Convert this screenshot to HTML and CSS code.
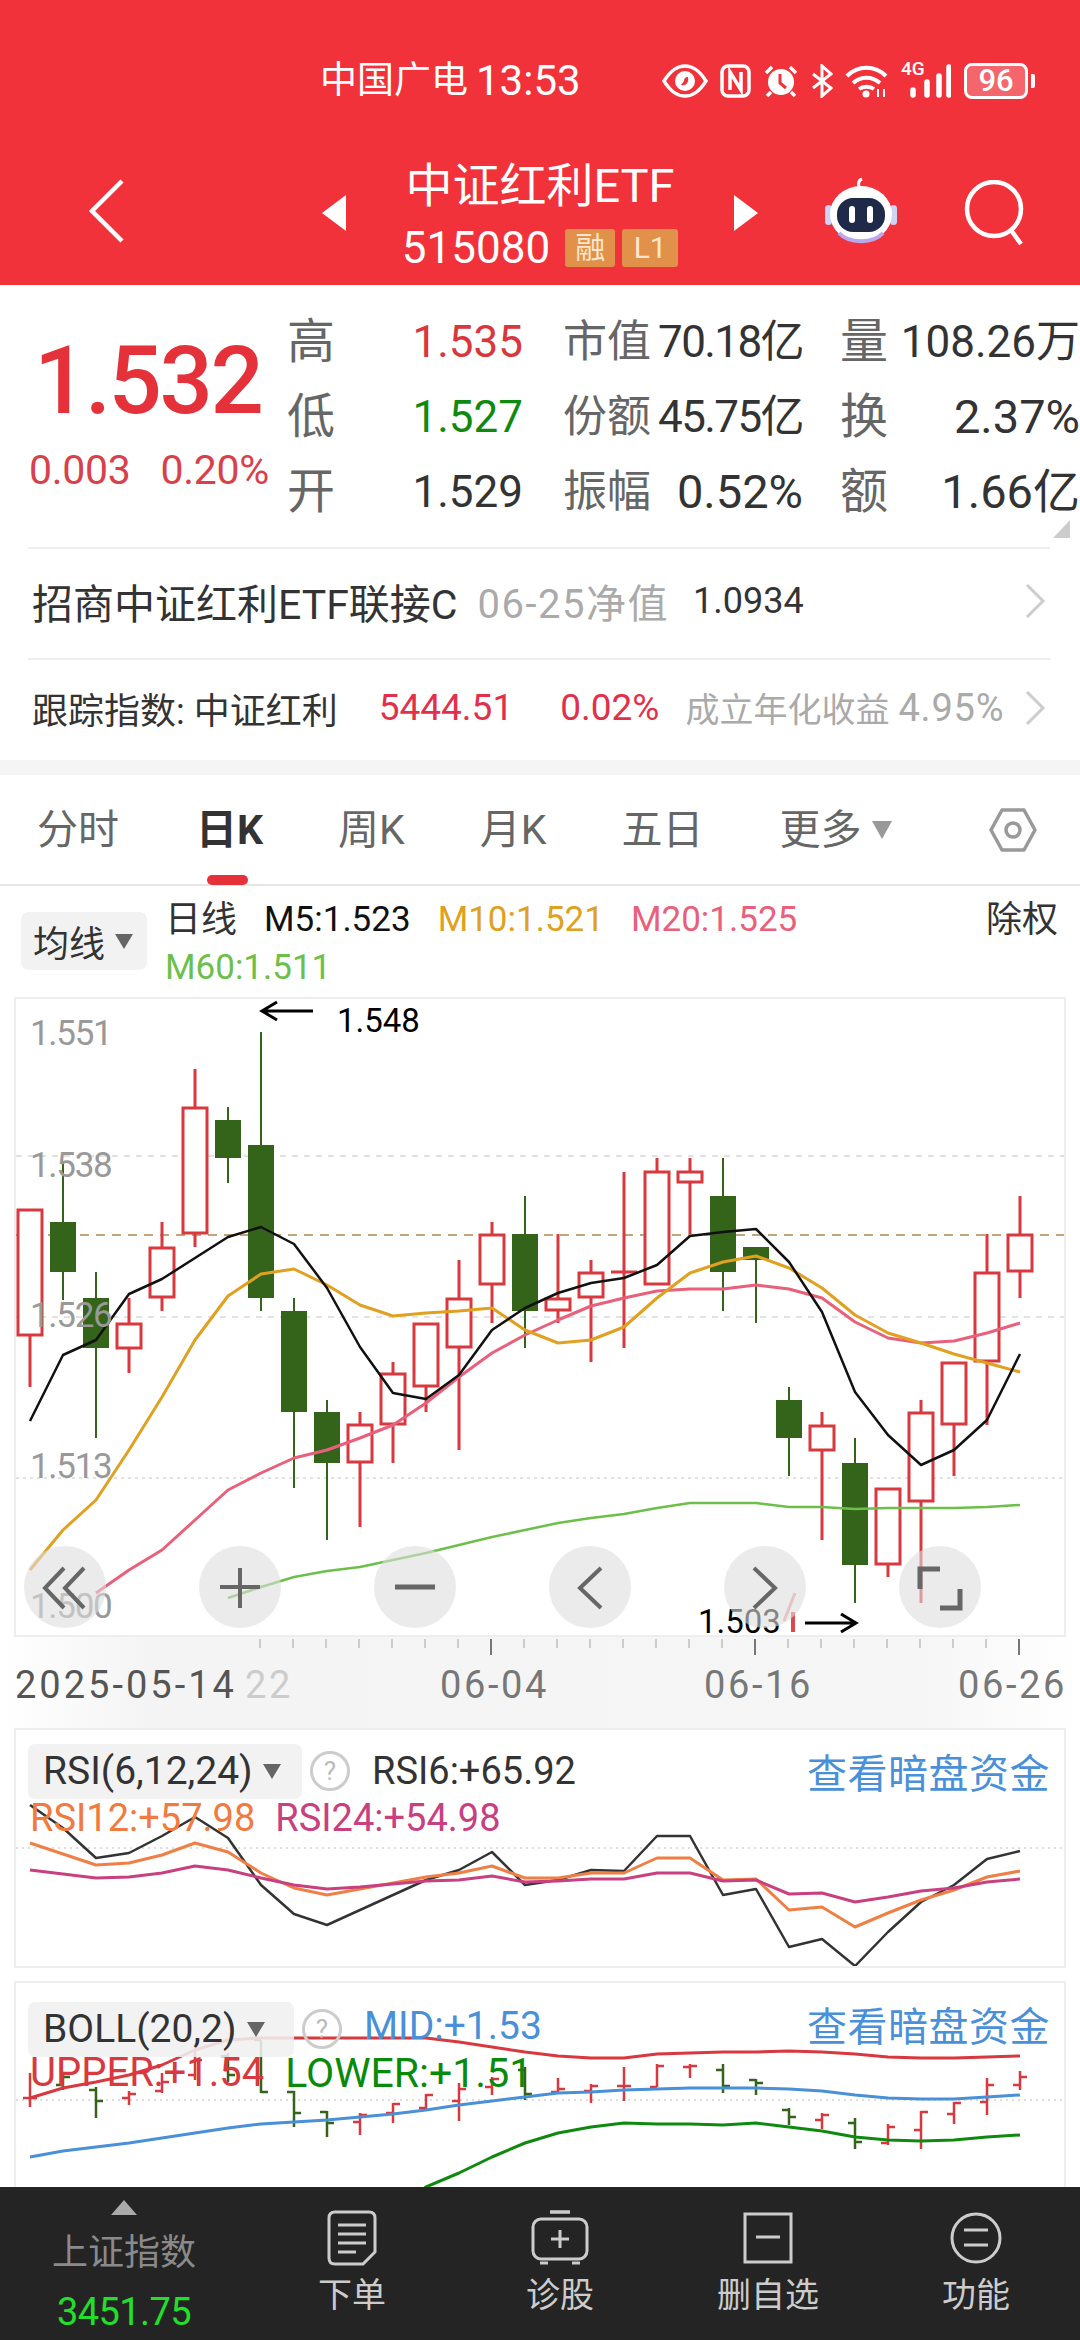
FILE: index.html
```html
<!DOCTYPE html>
<html lang="zh">
<head>
  <meta charset="UTF-8">
  <title>中证红利ETF</title>
  <meta name="viewport" content="width=device-width, initial-scale=1">
  <link rel="stylesheet" href="styles.css">
</head>
<body>
<div class="page">

  <header class="top">
    <div class="status">
      <span class="carrier">中国广电</span>
      <span class="clock">13:53</span>
      <div class="status-icons">
        <svg width="46" height="34" viewBox="0 0 46 34"><path d="M2 17C9 6 15 2 23 2s14 4 21 15c-7 11-13 15-21 15S9 28 2 17z" fill="none" stroke="#fff" stroke-width="3.5"/><circle cx="23" cy="17" r="10" fill="#fff"/><path d="M19 21c5 1 8-2 7-8-3 0-4 2-4 4z" fill="#f1323b"/></svg>
        <svg width="31" height="34" viewBox="0 0 31 34"><rect x="2" y="2" width="27" height="30" rx="6" fill="none" stroke="#fff" stroke-width="3.5"/><path d="M10 26V8l11 18V8" fill="none" stroke="#fff" stroke-width="3.5"/></svg>
        <svg width="36" height="34" viewBox="0 0 36 34"><circle cx="18" cy="18" r="13" fill="#fff"/><path d="M17 10v9l6 5" fill="none" stroke="#f1323b" stroke-width="3"/><path d="M3 9l6-6M33 9l-6-6M8 28l-4 4M28 28l4 4" stroke="#fff" stroke-width="3.5"/></svg>
        <svg width="22" height="34" viewBox="0 0 22 34"><path d="M2 10l18 14-9 8V2l9 8L2 24" fill="none" stroke="#fff" stroke-width="3"/></svg>
        <svg width="44" height="34" viewBox="0 0 44 34"><path d="M2 12c11-11 28-11 39 0M8 19c8-7 19-7 27 0M14 25c4-3 11-3 15 0" fill="none" stroke="#fff" stroke-width="4"/><circle cx="21" cy="30" r="3.5" fill="#fff"/><path d="M33 25v8M39 25v8" stroke="#fff" stroke-width="2"/></svg>
        <div class="signal">
          <span class="signal-label">4G</span>
          <svg width="50" height="34" viewBox="0 0 50 34"><path d="M12 26v5M26 18v13M38 12v19M48 3v28" stroke="#fff" stroke-width="5.5" stroke-linecap="round"/></svg>
        </div>
        <div class="battery"><span>96</span></div>
        <i class="battery-tip"></i>
      </div>
    </div>
    <nav class="nav">
      <svg class="back" width="38" height="66" viewBox="0 0 38 66"><path d="M34 3L4 33l30 30" fill="none" stroke="#fff" stroke-width="4.5"/></svg>
      <i class="tri tri-left"></i>
      <div class="title">
        <div class="name">中证红利ETF</div>
        <div class="code">515080<span class="badge">融</span><span class="badge badge-l">L1</span></div>
      </div>
      <i class="tri tri-right"></i>
      <svg class="bot" width="72" height="68" viewBox="0 0 72 68">
        <path d="M34 10c-1-4 0-7 3-8" fill="none" stroke="#fff" stroke-width="3"/>
        <rect x="0" y="28" width="7" height="20" rx="3.5" fill="#cfd3f5"/>
        <rect x="65" y="28" width="7" height="20" rx="3.5" fill="#cfd3f5"/>
        <ellipse cx="36" cy="37" rx="31" ry="28" fill="#fff"/>
        <path d="M14 56c10 11 34 11 44 0" fill="none" stroke="#b9a8ee" stroke-width="4"/>
        <rect x="12" y="21" width="48" height="34" rx="16" fill="#1f2a48"/>
        <rect x="24" y="29" width="6" height="17" rx="3" fill="#fff"/>
        <rect x="42" y="29" width="6" height="17" rx="3" fill="#fff"/>
      </svg>
      <svg class="search" width="70" height="66" viewBox="0 0 70 66"><circle cx="31" cy="29" r="27" fill="none" stroke="#fff" stroke-width="4.5"/><path d="M48 50l10 14" stroke="#fff" stroke-width="4.5"/></svg>
    </nav>
  </header>

  <section class="quote">
    <div class="price-box">
      <div class="price">1.532</div>
      <div class="change"><span>0.003</span><span>0.20%</span></div>
    </div>
    <div class="stats">
      <span class="lab">高</span><span class="val up">1.535</span>
      <span class="lab">市值</span><span class="val tight">70.18亿</span>
      <span class="lab">量</span><span class="val">108.26万</span>

      <span class="lab">低</span><span class="val down">1.527</span>
      <span class="lab">份额</span><span class="val tight">45.75亿</span>
      <span class="lab">换</span><span class="val wide">2.37%</span>

      <span class="lab">开</span><span class="val">1.529</span>
      <span class="lab">振幅</span><span class="val wide">0.52%</span>
      <span class="lab">额</span><span class="val wide">1.66亿</span>
    </div>
    <i class="corner"></i>
  </section>

  <section class="info">
    <div class="info-row">
      <span class="fund">招商中证红利ETF联接C</span>
      <span class="nav-date">06-25净值</span>
      <span class="nav-val">1.0934</span>
      <svg class="chev" width="22" height="36" viewBox="0 0 22 36"><path d="M3 2l16 16L3 34" fill="none" stroke="#ccc" stroke-width="3"/></svg>
    </div>
    <div class="info-row">
      <span class="track">跟踪指数: 中证红利</span>
      <span class="track-val">5444.51</span>
      <span class="track-pct">0.02%</span>
      <span class="since">成立年化收益</span>
      <span class="since-val">4.95%</span>
      <svg class="chev" width="22" height="36" viewBox="0 0 22 36"><path d="M3 2l16 16L3 34" fill="none" stroke="#ccc" stroke-width="3"/></svg>
    </div>
  </section>

  <div class="band"></div>

  <div class="tabs">
    <span class="tab">分时</span>
    <span class="tab active">日K</span>
    <span class="tab">周K</span>
    <span class="tab">月K</span>
    <span class="tab">五日</span>
    <span class="tab tab-more">更多<i class="caret"></i></span>
    <svg class="gear" width="48" height="46" viewBox="0 0 48 46"><path d="M13 3h22l11 20-11 20H13L2 23z" fill="none" stroke="#999" stroke-width="3.5" stroke-linejoin="round"/><circle cx="24" cy="23" r="7" fill="none" stroke="#999" stroke-width="3.5"/></svg>
  </div>

  <div class="ma">
    <div class="chip ma-chip">均线<i class="caret"></i></div>
    <div class="ma-legend">
      <span class="ma-name">日线</span>
      <span class="m5">M5:1.523</span>
      <span class="m10">M10:1.521</span>
      <span class="m20">M20:1.525</span>
      <span class="m60">M60:1.511</span>
    </div>
    <span class="adjust">除权</span>
  </div>

  <div class="chart">
    <svg id="kline" class="kline" viewBox="16 999 1048 636">
      <g id="kline-plot"></g>
      <text class="axis-y" x="30" y="1045">1.551</text>
      <text class="axis-y" x="30" y="1177">1.538</text>
      <text class="axis-y" x="30" y="1327">1.526</text>
      <text class="axis-y" x="30" y="1478">1.513</text>
      <text class="axis-y" x="30" y="1618">1.500</text>
      <path d="M262 1011h51M277 1002l-15 9 15 9" fill="none" stroke="#000" stroke-width="3"/>
      <text class="mark" x="337" y="1032">1.548</text>
      <text class="mark" x="698" y="1633">1.503</text>
      <path d="M805 1623h51M841 1614l15 9-15 9" fill="none" stroke="#000" stroke-width="3"/>
      <path d="M795 1593l-11 28" fill="none" stroke="#e8a0a0" stroke-width="3"/>
      <path d="M793 1612v20" fill="none" stroke="#dc4a4a" stroke-width="4"/>
    </svg>
    <div class="chart-btns">
      <span class="round"><svg width="82" height="82" viewBox="0 0 82 82"><path d="M40 22L21 42l19 20M60 22L41 42l19 20" fill="none" stroke="#666" stroke-width="4"/></svg></span>
      <span class="round"><svg width="82" height="82" viewBox="0 0 82 82"><path d="M21 41h40M41 22v40" fill="none" stroke="#666" stroke-width="4"/></svg></span>
      <span class="round"><svg width="82" height="82" viewBox="0 0 82 82"><path d="M21 41h40" fill="none" stroke="#666" stroke-width="5"/></svg></span>
      <span class="round"><svg width="82" height="82" viewBox="0 0 82 82"><path d="M52 22L31 42l21 20" fill="none" stroke="#666" stroke-width="4"/></svg></span>
      <span class="round"><svg width="82" height="82" viewBox="0 0 82 82"><path d="M30 22l21 20-21 20" fill="none" stroke="#666" stroke-width="4"/></svg></span>
      <span class="round"><svg width="82" height="82" viewBox="0 0 82 82"><path d="M21 43V23h20M61 43v19H41" fill="none" stroke="#666" stroke-width="5"/></svg></span>
    </div>
  </div>

  <div class="time-axis">
    <svg id="ticks" width="1080" height="91" viewBox="0 1637 1080 91">
      <text class="axis-x first" x="15" y="1698">2025-05-14</text>
      <text class="axis-x faint" x="245" y="1698">22</text>
      <text class="axis-x mid" x="440" y="1698">06-04</text>
      <text class="axis-x mid" x="704" y="1698">06-16</text>
      <text class="axis-x mid" x="958" y="1698">06-26</text>
    </svg>
  </div>

  <section class="panel panel-rsi">
    <svg id="rsi" class="panel-plot" viewBox="16 1730 1048 236"></svg>
    <div class="panel-head">
      <div class="chip rsi-chip">RSI(6,12,24)<i class="caret"></i></div>
      <span class="help">?</span>
      <span class="head-val">RSI6:+65.92</span>
      <span class="dark-link">查看暗盘资金</span>
    </div>
    <div class="panel-sub rsi-sub">
      <span class="rsi12">RSI12:+57.98</span>
      <span class="rsi24">RSI24:+54.98</span>
    </div>
  </section>

  <section class="panel panel-boll">
    <svg id="boll" class="panel-plot" viewBox="16 1983 1048 236"></svg>
    <div class="panel-head">
      <div class="chip boll-chip">BOLL(20,2)<i class="caret"></i></div>
      <span class="help">?</span>
      <span class="head-val mid-val">MID:+1.53</span>
      <span class="dark-link">查看暗盘资金</span>
    </div>
    <div class="panel-sub boll-sub">
      <span class="upper">UPPER:+1.54</span>
      <span class="lower">LOWER:+1.51</span>
    </div>
  </section>

  <footer class="bar">
    <div class="index">
      <i class="index-tri"></i>
      <span class="index-name">上证指数</span>
      <span class="index-val">3451.75</span>
    </div>
    <div class="action">
      <svg width="50" height="56" viewBox="0 0 50 56"><path d="M8 2h34q6 0 6 6v34L36 54H8q-6 0-6-6V8q0-6 6-6z" fill="none" stroke="#ccc" stroke-width="3"/><path d="M11 15h28M11 24h28M11 33h28M11 42h18" stroke="#ccc" stroke-width="3"/></svg>
      <span>下单</span>
    </div>
    <div class="action">
      <svg width="58" height="56" viewBox="0 0 58 56"><path d="M19 2h20" stroke="#ccc" stroke-width="3.5"/><rect x="2" y="9" width="54" height="40" rx="8" fill="none" stroke="#ccc" stroke-width="3"/><path d="M29 20v18M20 29h18M9 53h8M41 53h8" stroke="#ccc" stroke-width="3"/></svg>
      <span>诊股</span>
    </div>
    <div class="action">
      <svg width="50" height="52" viewBox="0 0 50 52"><rect x="2" y="2" width="46" height="48" fill="none" stroke="#ccc" stroke-width="3"/><path d="M13 25h24" stroke="#ccc" stroke-width="3"/></svg>
      <span>删自选</span>
    </div>
    <div class="action">
      <svg width="52" height="52" viewBox="0 0 52 52"><circle cx="26" cy="26" r="24" fill="none" stroke="#ccc" stroke-width="3"/><path d="M14 18h24M14 33h24" stroke="#ccc" stroke-width="3"/></svg>
      <span>功能</span>
    </div>
  </footer>

</div>
<script src="chart.js"></script>
</body>
</html>
```

FILE: styles.css
```css
*, *::before, *::after {
  box-sizing: border-box;
  margin: 0;
  padding: 0;
}
body {
  background: #fff;
  font-family: Roboto, "Noto Sans CJK SC", sans-serif;
  color: #333;
}
i {
  display: block;
}
.page {
  width: 1080px;
  height: 2340px;
  display: flex;
  flex-direction: column;
  overflow: hidden;
}

/* red header */
.top {
  height: 285px;
  background: #f1323b;
  color: #fff;
}
.status {
  height: 105px;
  margin-bottom: 45px;
  padding: 57px 45px 0 320px;
  display: flex;
  align-items: center;
}
.carrier {
  font-size: 37px;
  line-height: 50px;
}
.clock {
  font-size: 42px;
  line-height: 50px;
  margin-left: 8px;
}
.status-icons {
  margin-left: auto;
  display: flex;
  align-items: center;
  gap: 12px;
}
.signal {
  position: relative;
}
.signal svg {
  display: block;
}
.signal-label {
  position: absolute;
  left: 0;
  top: -5px;
  font-size: 19px;
  line-height: 20px;
  font-weight: 500;
}
.battery {
  width: 64px;
  height: 36px;
  border: 3px solid #fff;
  border-radius: 8px;
  background: rgba(255, 255, 255, .25);
  display: flex;
  align-items: center;
  justify-content: center;
  margin-left: 1px;
}
.battery span {
  font-size: 31px;
  line-height: 30px;
  font-weight: 500;
}
.battery-tip {
  width: 4px;
  height: 14px;
  background: #fff;
  margin-left: -9px;
  border-radius: 0 2px 2px 0;
}
.nav {
  height: 135px;
  display: flex;
  align-items: center;
}
.back {
  margin: 0 0 14px 88px;
}
.tri {
  width: 0;
  height: 0;
  margin-bottom: 9px;
  border-top: 18px solid transparent;
  border-bottom: 18px solid transparent;
}
.tri-left {
  margin-left: 196px;
  border-right: 24px solid #fff;
}
.tri-right {
  border-left: 24px solid #fff;
}
.title {
  width: 388px;
  text-align: center;
}
.name {
  font-size: 47px;
  line-height: 60px;
  padding-top: 3px;
  margin-bottom: -3px;
}
.code {
  font-size: 44px;
  line-height: 70px;
  display: flex;
  justify-content: center;
  align-items: center;
}
.badge {
  width: 50px;
  height: 38px;
  margin-left: 15px;
  background: #e2914a;
  color: #ffe6cc;
  font-size: 30px;
  line-height: 38px;
  border-radius: 3px;
}
.badge-l {
  width: 56px;
  margin-left: 7px;
}
.bot {
  margin: 0 0 14px 67px;
}
.search {
  margin: 0 0 9px 66px;
}

/* quote */
.quote {
  height: 262px;
  display: flex;
  position: relative;
}
.price-box {
  width: 287px;
  padding: 46px 0 0 30px;
}
.price {
  font-size: 94px;
  line-height: 100px;
  font-weight: 500;
  color: #e5323a;
  letter-spacing: -2.5px;
  padding-left: 4px;
}
.change {
  margin-top: 17px;
  margin-left: -1px;
  display: flex;
  gap: 30px;
  font-size: 41px;
  line-height: 44px;
  color: #d9414a;
  letter-spacing: -.3px;
}
.stats {
  padding-top: 19px;
  display: grid;
  grid-template-columns: 48px 188px 128px 152px 85px 192px;
  grid-auto-rows: 75px;
  align-items: center;
}
.lab {
  font-size: 44px;
  color: #666;
  text-align: right;
  line-height: 60px;
  white-space: nowrap;
}
.stats .lab:nth-child(6n + 1),
.stats .lab:nth-child(6n + 5) {
  font-size: 48px;
}
.val {
  font-size: 44px;
  line-height: 60px;
  text-align: right;
  color: #333;
  white-space: nowrap;
}
.tight {
  letter-spacing: -1.6px;
}
.wide {
  font-size: 47px;
}
.up {
  color: #d9363e;
}
.down {
  color: #0f8a0f;
}
.corner {
  position: absolute;
  right: 10px;
  bottom: 9px;
  width: 0;
  height: 0;
  border-left: 17px solid transparent;
  border-bottom: 18px solid #ccc;
}

/* fund rows */
.info {
  padding: 0 30px 0 28px;
}
.info-row {
  height: 111px;
  border-top: 2px solid #eee;
  display: flex;
  align-items: center;
  padding: 0 0 5px 4px;
}
.info-row + .info-row {
  height: 102px;
}
.fund {
  font-size: 41px;
  color: #333;
  white-space: nowrap;
}
.nav-date {
  font-size: 40px;
  color: #aaa;
  margin-left: 20px;
  letter-spacing: 1.5px;
}
.nav-val {
  font-size: 36px;
  color: #333;
  margin-left: 24px;
}
.chev {
  margin: 0 4px 0 auto;
}
.track {
  font-size: 36px;
  color: #333;
  white-space: nowrap;
}
.track-val {
  font-size: 37px;
  color: #e3304a;
  margin-left: 41px;
}
.track-pct {
  font-size: 37px;
  color: #e3304a;
  margin-left: 47px;
}
.since {
  font-size: 34px;
  color: #aaa;
  margin-left: 26px;
}
.since-val {
  font-size: 38px;
  color: #aaa;
  margin-left: 9px;
  letter-spacing: .8px;
}
.band {
  height: 15px;
  background: #f5f5f5;
}

/* tabs */
.tabs {
  height: 111px;
  padding: 0 43px 0 37px;
  display: flex;
  align-items: center;
  gap: 75px;
  border-bottom: 2px solid #e6e6e6;
  position: relative;
}
.tab {
  font-size: 41px;
  color: #666;
  line-height: 110px;
  display: flex;
  align-items: center;
  position: relative;
}
.active {
  color: #333;
  font-weight: 700;
  margin-left: 2px;
}
.active::after {
  content: "";
  position: absolute;
  left: 11px;
  bottom: 0;
  width: 41px;
  height: 10px;
  border-radius: 5px;
  background: #e5323a;
}
.tab-more {
  margin-left: 1px;
}
.caret {
  width: 0;
  height: 0;
  border-left: 10px solid transparent;
  border-right: 10px solid transparent;
  border-top: 18px solid #999;
  margin-left: 10px;
}
.gear {
  margin-left: auto;
}

/* moving average legend */
.ma {
  height: 111px;
  padding: 0 22px 0 21px;
  display: flex;
  align-items: flex-start;
  position: relative;
}
.chip {
  background: rgba(240, 240, 240, .88);
  border-radius: 7px;
  display: flex;
  align-items: center;
}
.chip .caret {
  border-top-color: #666;
  border-left-width: 9px;
  border-right-width: 9px;
  border-top-width: 15px;
}
.ma-chip {
  width: 126px;
  height: 58px;
  margin-top: 26px;
  padding-left: 12px;
  font-size: 36px;
  color: #333;
}
.ma-legend {
  width: 660px;
  margin: 10px 0 0 18px;
  display: flex;
  flex-wrap: wrap;
  font-size: 35px;
  line-height: 48px;
  column-gap: 27px;
}
.ma-name {
  font-size: 36px;
  color: #333;
}
.m5 {
  color: #111;
}
.m10 {
  color: #e0a020;
}
.m20 {
  color: #e8607a;
}
.m60 {
  color: #6cc04a;
}
.adjust {
  margin: 10px 0 0 auto;
  font-size: 36px;
  line-height: 48px;
  color: #333;
}

/* main chart */
.chart {
  margin: 0 14px;
  width: 1052px;
  height: 640px;
  position: relative;
}
.kline {
  display: block;
  width: 1052px;
  height: 640px;
  border: 2px solid #eee;
  overflow: visible;
}
.axis-y {
  font-size: 35px;
  fill: #999;
  letter-spacing: -1.3px;
}
.mark {
  font-size: 33px;
  fill: #000;
}
.chart-btns {
  position: absolute;
  left: 10px;
  top: 549px;
  display: flex;
  gap: 93px;
}
.round {
  width: 82px;
  height: 82px;
  border-radius: 50%;
  background: rgba(222, 222, 222, .6);
}
.round svg {
  display: block;
}
.time-axis {
  height: 91px;
  background: linear-gradient(90deg, #fff, #f4f4f4 14%, #f6f6f6 85%, #fff);
}
.time-axis svg {
  display: block;
}
.axis-x {
  font-size: 38px;
  letter-spacing: 2.6px;
  fill: #777;
}
.axis-x.first {
  fill: #555;
  letter-spacing: 3px;
}
.axis-x.faint {
  fill: #ccc;
}

/* indicator panels */
.panel {
  margin: 0 14px;
  width: 1052px;
  border: 2px solid #eee;
  position: relative;
}
.panel-rsi {
  height: 240px;
  flex: none;
}
.panel-boll {
  margin-top: 13px;
  flex: 1;
  border-bottom: 0;
  overflow: hidden;
}
.panel-plot {
  position: absolute;
  left: 0;
  top: 0;
  width: 1048px;
  height: 236px;
}
.panel-head {
  position: relative;
  padding: 12px 14px 0 12px;
  display: flex;
  align-items: center;
}
.rsi-chip,
.boll-chip {
  height: 55px;
  padding-left: 15px;
  font-size: 39px;
  color: #333;
  white-space: nowrap;
}
.rsi-chip {
  width: 274px;
}
.boll-chip {
  width: 266px;
}
.help {
  width: 40px;
  height: 40px;
  margin-left: 8px;
  border: 3px solid #ccc;
  border-radius: 50%;
  color: #bbb;
  font-size: 26px;
  line-height: 34px;
  text-align: center;
}
.head-val {
  margin-left: 22px;
  font-size: 38px;
  color: #333;
}
.mid-val {
  font-size: 39px;
  color: #4a90d9;
  margin-bottom: 6px;
}
.dark-link {
  margin-left: auto;
  font-size: 40px;
  color: #4a90d9;
  letter-spacing: .5px;
}
.panel-boll .dark-link {
  margin-bottom: 10px;
}
.panel-sub {
  position: relative;
  padding-left: 14px;
  display: flex;
}
.rsi-sub {
  margin-top: -2px;
  font-size: 38px;
  line-height: 40px;
  gap: 20px;
}
.rsi12 {
  color: #f07a40;
}
.rsi24 {
  color: #c8407f;
}
.boll-sub {
  margin-top: -10px;
  font-size: 40px;
  line-height: 40px;
  gap: 21px;
}
.upper {
  color: #d8383e;
}
.lower {
  color: #0a8a0a;
  font-size: 41px;
}

/* bottom bar */
.bar {
  height: 153px;
  flex: none;
  background: #242424;
  display: grid;
  grid-template-columns: 248px repeat(4, 208px);
  color: #ccc;
  position: relative;
}
.index {
  display: flex;
  flex-direction: column;
  align-items: center;
  padding-top: 13px;
}
.index-tri {
  width: 0;
  height: 0;
  border-left: 13px solid transparent;
  border-right: 13px solid transparent;
  border-bottom: 15px solid #aaa;
}
.index-name {
  margin-top: 13px;
  font-size: 36px;
  line-height: 50px;
  color: #8a8a8a;
}
.index-val {
  margin-top: 9px;
  font-size: 38px;
  line-height: 50px;
  color: #22e02a;
  letter-spacing: -.6px;
}
.action {
  display: flex;
  flex-direction: column;
  align-items: center;
  padding-top: 23px;
  font-size: 34px;
  line-height: 50px;
}
.action svg {
  height: 56px;
  margin-bottom: 4px;
}
```

FILE: chart.js
```js
const NS_X = i => 30 + 33 * i;

// high, body top, body bottom, low, r/g
const candles = [
  [1209, 1209, 1336, 1387, 'r'], [1163, 1222, 1272, 1300, 'g'], [1272, 1298, 1348, 1438, 'g'],
  [1298, 1323, 1349, 1373, 'r'], [1222, 1247, 1298, 1311, 'r'], [1069, 1107, 1234, 1247, 'r'],
  [1107, 1120, 1158, 1183, 'g'], [1032, 1145, 1298, 1311, 'g'], [1298, 1311, 1412, 1488, 'g'],
  [1400, 1412, 1463, 1540, 'g'], [1412, 1424, 1463, 1527, 'r'], [1362, 1373, 1425, 1463, 'r'],
  [1323, 1323, 1387, 1412, 'r'], [1260, 1298, 1348, 1450, 'r'], [1222, 1234, 1285, 1323, 'r'],
  [1196, 1234, 1311, 1348, 'g'], [1234, 1298, 1311, 1323, 'r'], [1260, 1272, 1298, 1362, 'r'],
  [1172, 1272, 1272, 1348, 'r'], [1158, 1171, 1285, 1285, 'r'], [1158, 1171, 1183, 1234, 'r'],
  [1158, 1196, 1272, 1311, 'g'], [1247, 1247, 1260, 1323, 'g'], [1387, 1400, 1438, 1476, 'g'],
  [1412, 1425, 1451, 1540, 'r'], [1438, 1463, 1565, 1603, 'g'], [1488, 1488, 1565, 1577, 'r'],
  [1400, 1412, 1502, 1603, 'r'], [1362, 1362, 1425, 1476, 'r'], [1234, 1272, 1362, 1425, 'r'],
  [1196, 1234, 1272, 1298, 'r']
];

const m5 = [1421, 1355, 1340, 1294, 1279, 1258, 1237, 1227, 1244, 1288, 1347, 1393, 1399, 1375, 1330, 1308,
  1293, 1283, 1278, 1265, 1236, 1232, 1229, 1262, 1312, 1392, 1435, 1465, 1450, 1420, 1354];
const m10 = [1570, 1530, 1500, 1450, 1397, 1340, 1296, 1274, 1269, 1285, 1305, 1316, 1313, 1311, 1308, 1330,
  1343, 1340, 1327, 1298, 1273, 1262, 1256, 1268, 1288, 1315, 1333, 1343, 1354, 1363, 1372];
const m20 = [null, null, 1593, 1570, 1550, 1520, 1490, 1473, 1458, 1450, 1438, 1425, 1403, 1377, 1353, 1335,
  1320, 1306, 1298, 1291, 1289, 1289, 1285, 1289, 1298, 1322, 1338, 1343, 1341, 1333, 1323];
const m60 = [null, null, null, null, null, null, 1598, 1587, 1577, 1571, 1567, 1560, 1553, 1545, 1537, 1530,
  1523, 1518, 1514, 1508, 1503, 1503, 1503, 1507, 1507, 1509, 1508, 1508, 1508, 1507, 1505];

const rsi6 = [1805, 1828, 1858, 1853, 1836, 1817, 1838, 1885, 1914, 1925, 1910, 1895, 1880, 1870, 1852, 1885,
  1880, 1870, 1871, 1836, 1836, 1895, 1889, 1947, 1939, 1966, 1932, 1902, 1885, 1859, 1851];
const rsi12 = [1843, 1854, 1865, 1863, 1855, 1843, 1852, 1873, 1888, 1895, 1889, 1883, 1877, 1873, 1866, 1878,
  1878, 1873, 1873, 1858, 1858, 1880, 1879, 1910, 1907, 1927, 1913, 1900, 1890, 1877, 1871];
const rsi24 = [1870, 1874, 1878, 1877, 1873, 1866, 1870, 1878, 1885, 1889, 1887, 1884, 1881, 1880, 1876, 1882,
  1881, 1879, 1879, 1873, 1873, 1881, 1880, 1894, 1893, 1902, 1897, 1891, 1888, 1882, 1879];

const upper = [2098, 2088, 2082, 2075, 2065, 2050, 2040, 2038, 2038, 2038, 2038, 2038, 2038, 2042, 2047, 2052,
  2056, 2058, 2058, 2054, 2053, 2052, 2052, 2051, 2052, 2054, 2057, 2058, 2058, 2057, 2056];
const mid = [2157, 2151, 2147, 2143, 2138, 2133, 2128, 2124, 2122, 2120, 2117, 2114, 2110, 2105, 2101, 2097,
  2093, 2092, 2090, 2089, 2088, 2088, 2088, 2089, 2091, 2095, 2098, 2099, 2099, 2097, 2095];
const lower = [null, null, null, null, null, null, null, null, null, null, null, 2215, 2187, 2173, 2157, 2143,
  2133, 2127, 2123, 2124, 2124, 2125, 2123, 2127, 2131, 2137, 2140, 2141, 2140, 2137, 2135];

// high, low, left tick, right tick, r/g
const bars = [
  [2073, 2107, 2098, 2098, 'r'], [2075, 2090, 2085, 2077, 'g'], [2087, 2118, 2090, 2101, 'g'], [2091, 2105, 2098, 2094, 'r'],
  [2073, 2093, 2091, 2082, 'r'], [2047, 2080, 2075, 2060, 'r'], [2053, 2082, 2056, 2075, 'g'], [2040, 2093, 2040, 2092, 'g'],
  [2091, 2127, 2092, 2113, 'g'], [2111, 2137, 2112, 2123, 'g'], [2113, 2135, 2122, 2115, 'r'], [2103, 2123, 2113, 2104, 'r'],
  [2094, 2110, 2108, 2095, 'r'], [2083, 2121, 2101, 2089, 'r'], [2077, 2095, 2087, 2079, 'r'], [2067, 2100, 2070, 2094, 'g'],
  [2078, 2094, 2092, 2089, 'r'], [2084, 2103, 2091, 2086, 'r'], [2067, 2101, 2086, 2086, 'r'], [2064, 2087, 2087, 2066, 'r'],
  [2064, 2078, 2067, 2066, 'r'], [2064, 2093, 2070, 2086, 'g'], [2079, 2095, 2080, 2083, 'g'], [2108, 2125, 2110, 2117, 'g'],
  [2113, 2129, 2120, 2115, 'r'], [2118, 2149, 2123, 2142, 'g'], [2124, 2145, 2143, 2127, 'r'], [2111, 2149, 2130, 2112, 'r'],
  [2102, 2124, 2114, 2103, 'r'], [2078, 2115, 2102, 2085, 'r'], [2071, 2090, 2085, 2077, 'r']
];

const RED = '#d8383e';
const GREEN = '#33641a';

function line(data, color, width) {
  const pts = data.map((y, i) => y === null ? null : `${NS_X(i)},${y}`).filter(Boolean).join(' ');
  return `<polyline points="${pts}" fill="none" stroke="${color}" stroke-width="${width}" stroke-linejoin="round"/>`;
}

function dash(y, color, pattern) {
  return `<path d="M16 ${y}H1064" stroke="${color}" stroke-width="2" stroke-dasharray="${pattern}"/>`;
}

function candle(c, i) {
  const [high, top, bottom, low, kind] = c;
  const x = NS_X(i);
  if (kind === 'g') {
    return `<path d="M${x} ${high}V${low}" stroke="${GREEN}" stroke-width="2"/>` +
      `<rect x="${x - 13}" y="${top}" width="26" height="${bottom - top}" fill="${GREEN}"/>`;
  }
  let out = `<path d="M${x} ${high}V${top}M${x} ${bottom}V${low}" stroke="${RED}" stroke-width="3"/>`;
  if (bottom === top) {
    out += `<path d="M${x - 13} ${top}H${x + 13}" stroke="${RED}" stroke-width="3"/>`;
  } else {
    out += `<rect x="${x - 12}" y="${top + 1}" width="24" height="${bottom - top - 2}" fill="#fff" stroke="${RED}" stroke-width="3"/>`;
  }
  return out;
}

function bar(b, i) {
  const [high, low, left, right, kind] = b;
  const x = NS_X(i);
  return `<path d="M${x} ${high}V${low}M${x - 7} ${left}H${x}M${x} ${right}H${x + 7}" fill="none" stroke="${kind === 'r' ? RED : GREEN}" stroke-width="2.5"/>`;
}

document.querySelector('#kline-plot').innerHTML =
  dash(1156, '#e2e2e2', '6 6') + dash(1317, '#e2e2e2', '6 6') + dash(1478, '#e2e2e2', '3 4') +
  dash(1235, '#c4a478', '9 7') +
  candles.map(candle).join('') +
  line(m60, '#6cc04a', 2.5) + line(m20, '#e8607a', 3) + line(m10, '#e0a020', 3) + line(m5, '#111', 2.5);

document.querySelector('#rsi').innerHTML =
  dash(1848, '#ddd', '2 4') +
  line(rsi6, '#333', 2.5) + line(rsi12, '#ef7f45', 3) + line(rsi24, '#c8407f', 3);

document.querySelector('#boll').innerHTML =
  dash(2100, '#ddd', '2 4') +
  bars.map(bar).join('') +
  line(upper, '#d8383e', 3) + line(mid, '#4a90d9', 3) + line(lower, '#0f8a0f', 3);

let ticks = '';
for (let i = 7; i <= 30; i++) {
  const major = i === 14 || i === 22 || i === 30;
  const x = NS_X(i) - 1;
  ticks += `<path d="M${x} 1639V${major ? 1655 : 1648}" stroke="${major ? '#777' : '#ccc'}" stroke-width="2"/>`;
}
document.querySelector('#ticks').insertAdjacentHTML('afterbegin', ticks);
```
